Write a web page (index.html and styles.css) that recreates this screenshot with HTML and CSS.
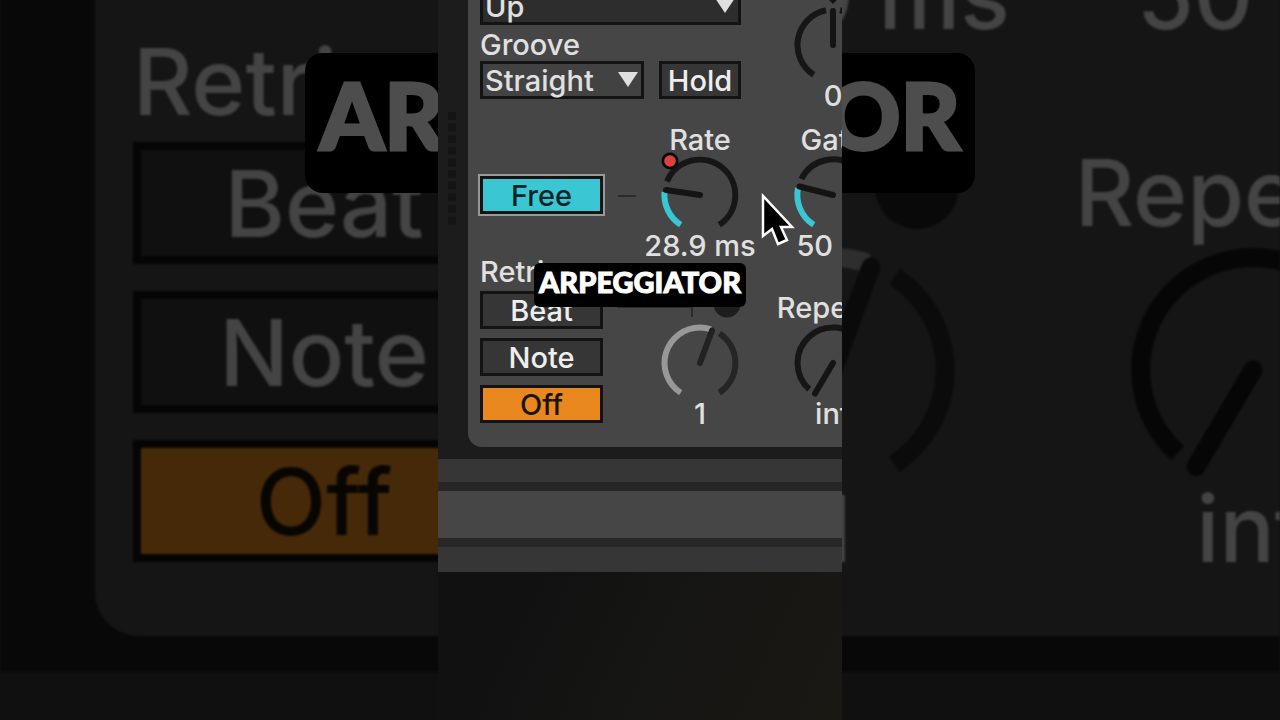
FILE: index.html
```html
<!DOCTYPE html>
<html lang="en">
<head>
<meta charset="utf-8">
<title>Arpeggiator</title>
<link rel="stylesheet" href="styles.css">
</head>
<body>
<svg class="symbols" aria-hidden="true">
  <symbol id="knob-rate" viewBox="0 0 120 76" overflow="visible">
    <path class="arc" d="M27 27.5A35.5 35.5 0 1 1 79.3 70.8"/>
    <path class="arc arc-value" d="M40.7 70.8A35.5 35.5 0 0 1 24.5 38"/>
    <path class="needle" d="M60 41L26 36"/>
    <circle class="ring" cx="30" cy="7" r="8.5"/><circle class="red" cx="30" cy="7" r="5.8"/>
  </symbol>
  <symbol id="knob-gate" viewBox="0 0 120 76">
    <path class="arc" d="M28.4 25A35.5 35.5 0 1 1 79.3 70.8"/>
    <path class="arc arc-value" d="M40.7 70.8A35.5 35.5 0 0 1 25 34"/>
    <path class="needle" d="M60 41L26.5 32.5"/>
  </symbol>
  <symbol id="knob-dim" viewBox="0 0 120 76">
    <path class="arc arc-dim" d="M79.5 11.5A35.5 35.5 0 0 1 79.3 70.8"/>
    <path class="arc arc-gray" d="M40.7 70.8A35.5 35.5 0 0 1 60 5.5A35.5 35.5 0 0 1 71 7.3"/>
    <path class="needle needle-dim" d="M60 41L72 8.5"/>
  </symbol>
  <symbol id="knob-repeats" viewBox="0 0 120 76">
    <path class="arc" d="M36.2 67.3A35.5 35.5 0 1 1 79.3 70.8"/>
    <path class="needle" d="M60 41L42 71.5"/>
  </symbol>
  <symbol id="knob-steps" viewBox="0 0 120 76" overflow="visible">
    <path class="arc" d="M40.7 70.8A35.5 35.5 0 0 1 53 6.2M67 6.2A35.5 35.5 0 0 1 79.3 70.8"/>
    <path class="needle" d="M60 41L60 7"/>
    <path d="M55 -5H65L60 0Z" fill="#141414"/>
  </symbol>
</svg>

<main class="stage">
  <div class="backdrop" aria-hidden="true">
    <div class="bd-device">
      <div class="bd-panel">
        <div class="bd-left">
          <div class="bd-text bd-label">Retrigger</div>
          <div class="bd-buttons">
            <button class="bd-text bd-button" type="button" tabindex="-1">Beat</button>
            <button class="bd-text bd-button" type="button" tabindex="-1">Note</button>
            <button class="bd-text bd-button on" type="button" tabindex="-1">Off</button>
          </div>
        </div>
        <div class="bd-column">
          <div class="bd-text">28.9 ms</div>
          <div class="bd-dot-slot"><span class="bd-dot"></span></div>
          <svg class="bd-knob"><use href="#knob-dim"/></svg>
          <div class="bd-text">1</div>
        </div>
        <div class="bd-column">
          <div class="bd-text">50 %</div>
          <div class="bd-text bd-spaced">Repeats</div>
          <svg class="bd-knob"><use href="#knob-repeats"/></svg>
          <div class="bd-text">inf</div>
        </div>
      </div>
    </div>
    <div class="caption bd-caption">ARPEGGIATOR</div>
  </div>

  <section class="clip">
    <div class="device">
      <svg class="meter" viewBox="0 0 30 447" aria-hidden="true"><path d="M14 112V228" stroke="#141414" stroke-width="8" stroke-dasharray="8 3.6"/></svg>
      <div class="panel">
        <div class="main">
          <div class="choices">
            <div class="drop drop-dark">
              <select id="style" aria-label="Style"><option>Up</option></select>
              <svg class="tri" viewBox="0 0 20 15"><path d="M0 0H20L10 15Z"/></svg>
            </div>
            <label class="label" for="groove">Groove</label>
            <div class="pair">
              <div class="drop">
                <select id="groove"><option>Straight</option></select>
                <svg class="tri" viewBox="0 0 20 15"><path d="M0 0H20L10 15Z"/></svg>
              </div>
              <button class="button" type="button">Hold</button>
            </div>
          </div>
          <div class="timing">
            <div class="modes">
              <button class="button free" type="button">Free</button>
              <div class="retrigger">
                <div class="label-row">Retrigger</div>
                <div class="buttons">
                  <button class="button" type="button">Beat</button>
                  <button class="button" type="button">Note</button>
                  <button class="button on" type="button">Off</button>
                </div>
              </div>
            </div>
            <div class="link"></div>
            <div class="column">
              <div class="dial"><span>Rate</span><svg class="knob"><use href="#knob-rate"/></svg><span>28.9 ms</span></div>
              <div class="dial">
                <svg class="branch" viewBox="0 0 120 30"><path d="M-23 15H52V25" fill="none" stroke="#2b2b2b" stroke-width="2"/><circle cx="87" cy="12" r="13.5" fill="#1e1e1e"/></svg>
                <svg class="knob"><use href="#knob-dim"/></svg><span>1</span>
              </div>
            </div>
          </div>
        </div>
        <div class="column side">
          <div class="dial first"><svg class="knob"><use href="#knob-steps"/></svg><span>0</span></div>
          <div class="dial"><span>Gate</span><svg class="knob"><use href="#knob-gate"/></svg><span>50 %</span></div>
          <div class="dial"><span>Repeats</span><svg class="knob"><use href="#knob-repeats"/></svg><span>inf</span></div>
        </div>
      </div>
    </div>
    <div class="strip"></div>
    <div class="strip-tall"></div>
    <div class="strip strip-last"></div>
    <div class="desk"></div>
    <svg class="cursor" viewBox="0 0 36 54" aria-hidden="true"><path d="M2 3V43L11 36L17 51L26 47L20 34H31Z" fill="#000" stroke="#fff" stroke-width="2.5"/></svg>
    <div class="caption">ARPEGGIATOR</div>
  </section>
</main>
</body>
</html>
```
FILE: styles.css
```css
:root {
  --shell: #1c1c1c;
  --panel: #464646;
  --button: #363636;
  --edge: #131313;
  --ink: #e0e0e0;
  --orange: #e8881f;
  --cyan: #3bc6d4;
}
* { box-sizing: border-box; }
body {
  margin: 0;
  background: #000;
  color: var(--ink);
  font: 500 29px/30px Inter, "Liberation Sans", sans-serif;
}
button, select { font: inherit; color: inherit; margin: 0; }
svg { display: block; }
.symbols { position: absolute; width: 0; height: 0; }

.stage {
  position: relative;
  display: flex;
  justify-content: center;
  height: 100vh;
  overflow: hidden;
}

/* Knobs */
.arc { fill: none; stroke: #161616; stroke-width: 6; }
.arc-value { stroke: var(--cyan); }
.arc-dim { stroke: #252525; }
.arc-gray { stroke: #989898; }
.needle { stroke: #141414; stroke-width: 6; stroke-linecap: round; }
.needle-dim { stroke: #222; }
.ring { fill: #080808; }
.red { fill: #de4040; }

/* Caption */
.caption {
  position: absolute;
  top: 263px;
  left: 0;
  right: 0;
  width: fit-content;
  margin: 0 auto;
  padding: 0 5px 6px;
  border-radius: 6px;
  background: #000;
  color: #fff;
  font: 900 29px/38px Lato, sans-serif;
  -webkit-text-stroke: 1px currentColor;
  white-space: nowrap;
}

/* Dimmed enlargement behind the clip */
.backdrop {
  position: absolute;
  inset: 0;
  overflow: hidden;
  background: var(--button);
  opacity: 0.3;
}
.bd-device {
  margin-top: -52px;
  padding: 0 0 36px 95px;
  background: var(--shell);
  overflow: hidden;
  filter: blur(1px);
}
.bd-panel {
  display: flex;
  padding: 0 0 60px 38px;
  border-bottom-left-radius: 44px;
  background: var(--panel);
}
.bd-text { font-size: 92px; line-height: 95px; white-space: nowrap; }
.bd-left { flex: 0 0 390px; min-width: 0; margin-right: 120px; padding-top: 86px; }
.bd-buttons { display: grid; gap: 27px; margin-top: 13px; }
.bd-button {
  height: 122px;
  padding: 0 8px 0 0;
  border: 8px solid var(--edge);
  background: var(--button);
}
.bd-column {
  display: flex;
  flex: 0 0 380px;
  min-width: 0;
  flex-direction: column;
  align-items: center;
  margin-right: 40px;
}
.bd-spaced, .bd-dot-slot { margin-top: 102px; }
.bd-dot-slot { width: 100%; height: 95px; }
.bd-dot {
  display: block;
  width: 84px;
  height: 84px;
  margin-left: 232px;
  border-radius: 50%;
  background: #1e1e1e;
}
.bd-knob { width: 380px; height: 241px; }
.bd-caption {
  top: 53px;
  padding: 0 15px 16px;
  border-radius: 18px;
  font-size: 92px;
  line-height: 124px;
  -webkit-text-stroke-width: 3px;
}

/* Clip */
.clip {
  position: relative;
  display: flex;
  flex-direction: column;
  width: 404px;
  height: 100%;
  overflow: hidden;
}
.device {
  display: flex;
  flex: none;
  padding-bottom: 12px;
  background: var(--shell);
}
.meter { flex: none; width: 30px; height: 447px; }
.panel {
  display: flex;
  flex: 1 0 auto;
  padding: 0 0 19px 12px;
  border-bottom-left-radius: 14px;
  background: var(--panel);
}
.main { flex: 0 0 280px; min-width: 0; margin-right: 13px; }
.choices { display: flex; flex-direction: column; width: 261px; margin-top: -13px; }
.label { height: 36px; line-height: 40px; }
.pair { display: grid; grid-template-columns: 164px 82px; gap: 15px; }
.drop { position: relative; }
.drop select {
  display: block;
  width: 100%;
  height: 38px;
  padding: 1px 5px 0;
  border: 0;
  border-radius: 0;
  box-shadow: inset 0 0 0 3px var(--edge);
  background: #424242;
  line-height: 37px;
  appearance: none;
}
.drop-dark select { background: #2d2d2d; }
.tri {
  position: absolute;
  top: 11px;
  right: 6px;
  width: 20px;
  height: 15px;
  fill: var(--ink);
}
.button {
  height: 38px;
  padding: 2px 0 0;
  border: 3px solid var(--edge);
  background: var(--button);
  color: #eee;
}
.on, .bd-button.on { background: var(--orange); color: #1c1408; }
.free {
  background: var(--cyan);
  color: #0c2428;
  outline: 2px solid #999;
}
.timing { display: flex; margin-top: 25px; }
.modes { display: flex; flex-direction: column; flex: 0 0 123px; min-width: 0; padding-top: 52px; }
.retrigger { margin-top: 43px; }
.label-row { line-height: 30px; margin-bottom: 4px; }
.buttons { display: grid; gap: 9px; }
.link {
  width: 18px;
  height: 2px;
  margin: 71px 4px 0 15px;
  background: #2b2b2b;
}
.column { display: flex; flex: 0 0 120px; min-width: 0; flex-direction: column; gap: 32px; }
.dial {
  display: flex;
  flex-direction: column;
  align-items: center;
  white-space: nowrap;
}
.dial span { padding-top: 1px; height: 30px; }
.knob { width: 120px; height: 76px; overflow: visible; }
.branch { width: 120px; height: 30px; overflow: visible; }
.side { padding-top: 4px; }
.first { margin-bottom: -18px; }

.strip { flex: 0 0 23px; background: var(--button); }
.strip-last { flex-basis: 25px; }
.strip-tall {
  flex: 0 0 65px;
  border: solid #272727;
  border-width: 9px 0;
  background: var(--panel);
}
.desk { flex: 1; background: linear-gradient(115deg, #111 20%, #151514 50%, #1a1813); }
.cursor {
  position: absolute;
  top: 193px;
  left: 323px;
  width: 36px;
  height: 54px;
}
```
